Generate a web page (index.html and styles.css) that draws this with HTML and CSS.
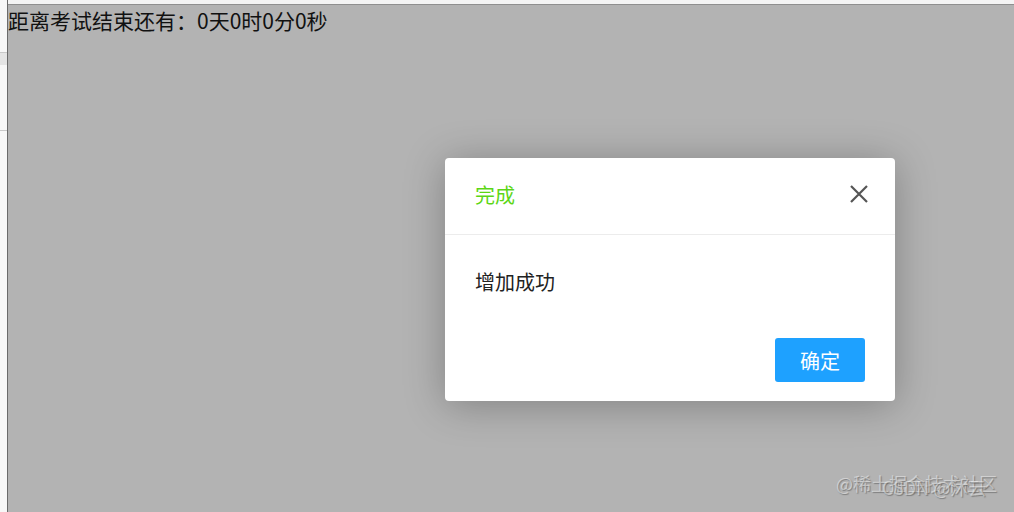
FILE: index.html
```html
<!DOCTYPE html>
<html lang="zh-CN">
<head>
  <meta charset="UTF-8">
  <meta name="viewport" content="width=device-width, initial-scale=1.0">
  <title>考试倒计时</title>
  <link rel="stylesheet" href="styles.css">
</head>
<body>
  <div class="page">
    <!-- editor gutter on the left -->
    <div class="gutter">
      <div class="gutter-row"></div>
      <div class="gutter-row tall"></div>
    </div>

    <div class="main">
      <div class="countdown">距离考试结束还有：0天0时0分0秒</div>
    </div>
  </div>

  <!-- modal -->
  <div class="dialog">
    <div class="dialog-header">
      <span class="dialog-title">完成</span>
      <svg class="dialog-close" width="20" height="20" viewBox="0 0 20 20">
        <path d="M2 2L18 18M18 2L2 18" stroke="#555" stroke-width="2.2" fill="none"/>
      </svg>
    </div>
    <div class="dialog-body">增加成功</div>
    <div class="dialog-footer">
      <button class="btn-ok">确定</button>
    </div>
  </div>

  <div class="watermark">
    <span class="wm-a">@稀土掘金技术社区</span>
    <span class="wm-b">CSDN @沐云</span>
  </div>
</body>
</html>
```

FILE: styles.css
```css
body {
  margin: 0;
  font-family: "Noto Sans CJK SC", "Noto Sans", sans-serif;
  overflow: hidden;
}

.page {
  display: flex;
  height: 512px;
}

.gutter {
  width: 7px;
  background: #f7f7f7;
  border-right: 1px solid #6a6a6a;
  padding-top: 52px;
}

.gutter-row {
  height: 12px;
  border-top: 1px solid #c8c8c8;
  background: #e4e4e4;
}

.gutter-row.tall {
  height: 0;
  margin-top: 65px;
  background: none;
}

.main {
  flex: 1;
  background: #b3b3b3;
  border-top: 4px solid #f4f4f4;
  box-shadow: inset 0 1px 0 #8f8f8f;
}

.countdown {
  font-size: 21px;
  line-height: 26px;
  padding-top: 3px;
  color: #111;
}

.dialog {
  position: absolute;
  left: 445px;
  top: 158px;
  width: 450px;
  background: #fff;
  border-radius: 4px;
  box-shadow: 0 4px 40px rgba(0, 0, 0, 0.28);
}

.dialog-header {
  height: 72px;
  padding: 0 26px 4px 30px;
  display: flex;
  align-items: center;
  justify-content: space-between;
  border-bottom: 1px solid #ececec;
}

.dialog-title {
  font-size: 20px;
  color: #5cd616;
}

.dialog-close {
  display: block;
}

.dialog-body {
  padding: 35px 30px 0;
  font-size: 20px;
  line-height: 24px;
  color: #222;
}

.dialog-footer {
  display: flex;
  justify-content: flex-end;
  padding: 44px 30px 19px;
}

.btn-ok {
  width: 90px;
  height: 44px;
  border: none;
  border-radius: 3px;
  background: #1ea1ff;
  color: #fff;
  font-family: inherit;
  font-size: 20px;
}

.watermark {
  position: absolute;
  right: 14px;
  bottom: 12px;
  width: 164px;
  height: 30px;
  font-size: 18px;
  color: rgba(255, 255, 255, 0.45);
  text-shadow: 1px 1px 1px rgba(90, 90, 90, 0.6);
}

.wm-a {
  position: absolute;
  left: 0;
  top: 0;
  white-space: nowrap;
}

.wm-b {
  position: absolute;
  left: 46px;
  top: 4px;
  white-space: nowrap;
}
```
